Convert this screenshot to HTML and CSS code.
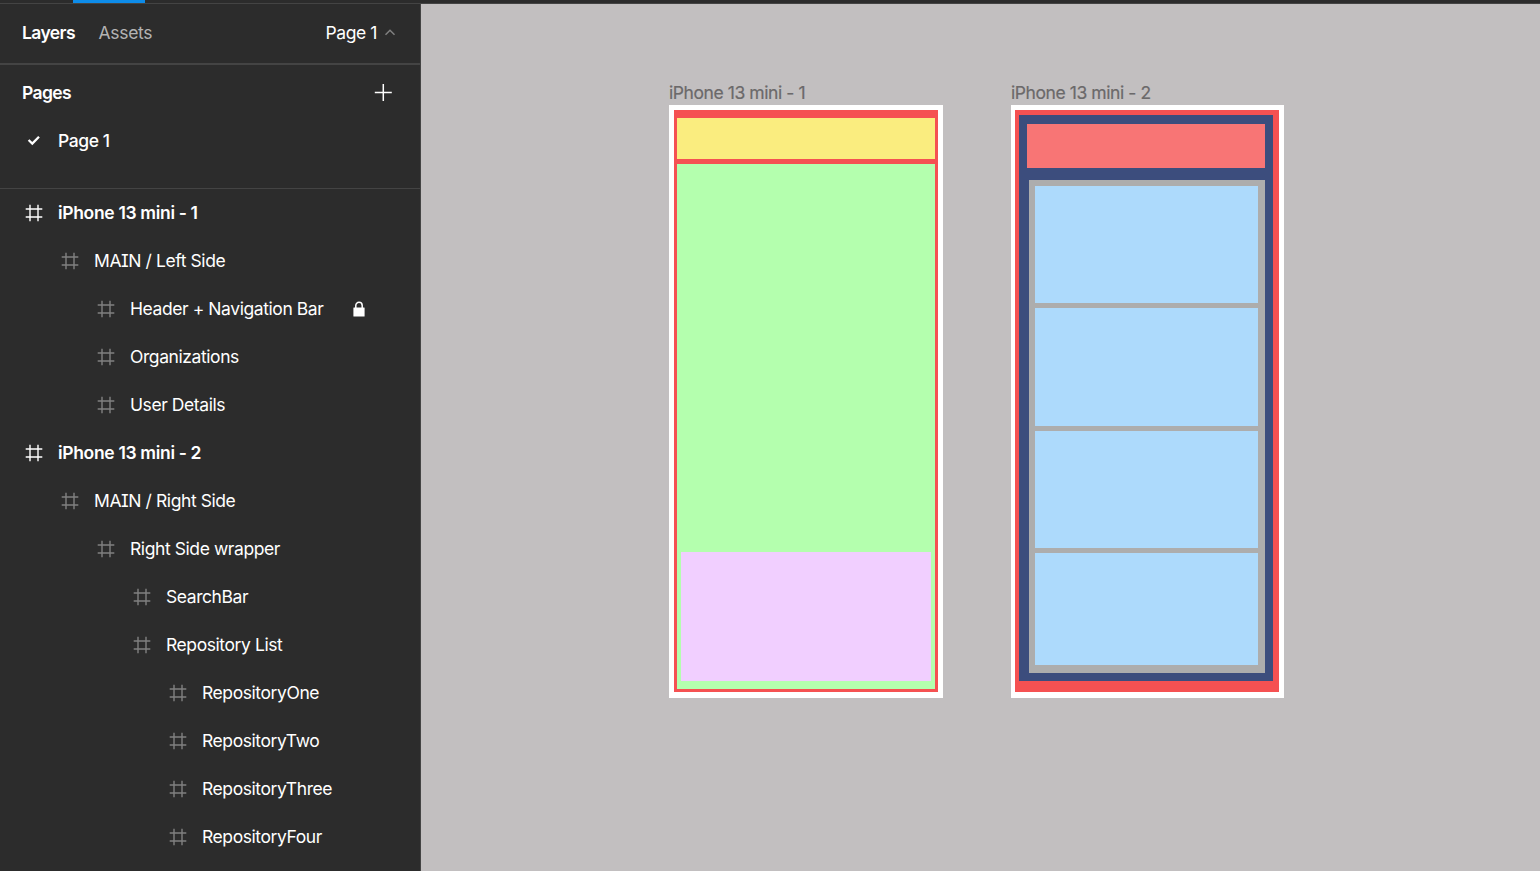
FILE: index.html
```html
<!DOCTYPE html>
<html lang="en">
<head>
<meta charset="utf-8">
<title>Layers</title>
<link rel="stylesheet" href="styles.css">
</head>
<body>
<svg width="0" height="0" class="defs">
  <symbol id="frame" viewBox="0 0 18 18"><path d="M5 .7v16.6M13 .7v16.6M.7 5h16.6M.7 13h16.6" fill="none" stroke="currentColor" stroke-width="1.4"/></symbol>
</svg>
<div class="toolbar"><div class="active-tool"></div></div>
<div class="workspace">
  <aside class="panel">
    <header class="tabs">
      <span class="tab active">Layers</span>
      <span class="tab muted">Assets</span>
      <span class="page-name">Page 1</span>
      <svg class="caret" width="12" height="8" viewBox="0 0 12 8"><path d="M1.500 5.700 6 1.300l4.500 4.400" fill="none" stroke="currentColor" stroke-width="1.500"/></svg>
    </header>
    <section class="pages">
      <div class="pages-head">
        <span class="title">Pages</span>
        <svg width="18" height="18" viewBox="0 0 18 18"><path d="M9.300 0v17M.8 8.500h17" stroke="#fff" stroke-width="1.500"/></svg>
      </div>
      <div class="page-row">
        <svg width="14" height="12" viewBox="0 0 14 12"><path d="M1.600 5 5.300 8.600 12 1.800" fill="none" stroke="#fff" stroke-width="2.300"/></svg>
        <span class="page-current">Page 1</span>
      </div>
    </section>
    <div class="layers">
      <div class="row top"><svg><use href="#frame"/></svg><span>iPhone 13 mini - 1</span></div>
      <div class="row d1"><svg><use href="#frame"/></svg><span>MAIN / Left Side</span></div>
      <div class="row d2"><svg><use href="#frame"/></svg><span>Header + Navigation Bar</span>
        <svg class="lock" viewBox="0 0 12 16"><path d="M2.800 8V4.500a3.200 3.200 0 0 1 6.400 0V8" fill="none" stroke="#fff" stroke-width="1.500"/><rect x=".4" y="6.500" width="11.200" height="9" rx=".5" fill="#fff"/></svg>
      </div>
      <div class="row d2"><svg><use href="#frame"/></svg><span>Organizations</span></div>
      <div class="row d2"><svg><use href="#frame"/></svg><span>User Details</span></div>
      <div class="row top"><svg><use href="#frame"/></svg><span>iPhone 13 mini - 2</span></div>
      <div class="row d1"><svg><use href="#frame"/></svg><span>MAIN / Right Side</span></div>
      <div class="row d2"><svg><use href="#frame"/></svg><span>Right Side wrapper</span></div>
      <div class="row d3"><svg><use href="#frame"/></svg><span>SearchBar</span></div>
      <div class="row d3"><svg><use href="#frame"/></svg><span>Repository List</span></div>
      <div class="row d4"><svg><use href="#frame"/></svg><span>RepositoryOne</span></div>
      <div class="row d4"><svg><use href="#frame"/></svg><span>RepositoryTwo</span></div>
      <div class="row d4"><svg><use href="#frame"/></svg><span>RepositoryThree</span></div>
      <div class="row d4"><svg><use href="#frame"/></svg><span>RepositoryFour</span></div>
    </div>
  </aside>
  <main class="canvas">
    <div class="artboard first">
      <div class="label">iPhone 13 mini - 1</div>
      <div class="phone">
        <div class="left-side">
          <div class="nav"></div>
          <div class="orgs"><div class="user"></div></div>
        </div>
      </div>
    </div>
    <div class="artboard second">
      <div class="label">iPhone 13 mini - 2</div>
      <div class="phone">
        <div class="right-side">
          <div class="wrapper">
            <div class="search"></div>
            <div class="repos"><div></div><div></div><div></div><div></div></div>
          </div>
        </div>
      </div>
    </div>
  </main>
</div>
</body>
</html>
```
FILE: styles.css
```css
* { box-sizing: border-box; }
body {
  margin: 0;
  height: 871px;
  overflow: hidden;
  background: #2c2c2c;
  color: #fff;
  font: 400 17.5px/24px Inter, sans-serif;
  letter-spacing: -0.42px;
}
svg { flex: none; }
.defs { display: block; position: absolute; }
.toolbar { height: 4px; border-bottom: 1px solid #444; }
.active-tool { width: 72px; height: 3px; margin-left: 73px; background: #0d8ce9; }
.workspace { display: flex; height: 867px; }
.panel { width: 421px; flex: none; border-right: 1px solid #444; }

.tabs {
  display: flex;
  align-items: center;
  height: 61px;
  padding: 0 24px 2px 22px;
  border-bottom: 2px solid #444;
}
.active, .title, .top { font-weight: 600; }
.active, .title { letter-spacing: -0.6px; }
.top { letter-spacing: -0.33px; }
.active { width: 76.500px; }
.muted { color: #b3b3b3; letter-spacing: -0.3px; }
.page-name { margin-left: auto; margin-right: 7px; }
.caret { color: #808080; }

.pages { height: 124px; border-bottom: 1px solid #444; }
.pages-head { display: flex; align-items: center; justify-content: space-between; height: 52px; padding: 3px 28px 0 22px; }
.page-row { display: flex; align-items: center; height: 48px; padding-left: 27px; gap: 17px; }
.page-current { font-weight: 500; }

.row { display: flex; align-items: center; height: 48px; padding-left: 25px; gap: 15px; font-feature-settings: "cv08"; white-space: nowrap; }
.row > svg { width: 18px; height: 18px; color: #808080; }
.row.top > svg { color: #fff; }
.row.d1 { padding-left: 61px; }
.row.d2 { padding-left: 97px; }
.row.d3 { padding-left: 133px; }
.row.d4 { padding-left: 169px; }
.row > .lock { width: 12px; height: 16px; margin-left: auto; margin-right: 55px; }

.canvas { flex: 1; display: flex; align-items: flex-start; gap: 68px; padding: 77px 0 0 248px; background: #c2bfc0; }
.first { width: 274px; }
.second { width: 273px; }
.label { height: 24px; color: #6b696a; white-space: nowrap; -webkit-text-stroke: 0.2px #6b696a; }
.phone { height: 593px; padding: 5px 5px 6px; background: #fff; }
.second .phone { padding-left: 4px; }

.left-side { height: 582px; padding: 8px 3px 3px; background: #f55152; }
.nav { height: 41px; margin-bottom: 5px; background: #faed7f; }
.orgs { height: 525px; padding: 388px 4px 0; background: #b4ffae; }
.user { height: 129px; background: #f1cfff; }

.right-side { height: 582px; padding: 5px 6px 11px 4px; background: #f55152; }
.wrapper { height: 566px; padding: 9px 8px 9px 8px; background: #3c4d7d; }
.search { height: 44px; margin-bottom: 12px; background: #f87575; }
.repos {
  display: grid;
  grid-template-rows: repeat(3, 117.3px) 112px;
  row-gap: 5px;
  height: 493px;
  margin-left: 2px;
  padding: 6px 7px 8px 6px;
  background: #adadad;
}
.repos > div { background: #addafc; }
```
